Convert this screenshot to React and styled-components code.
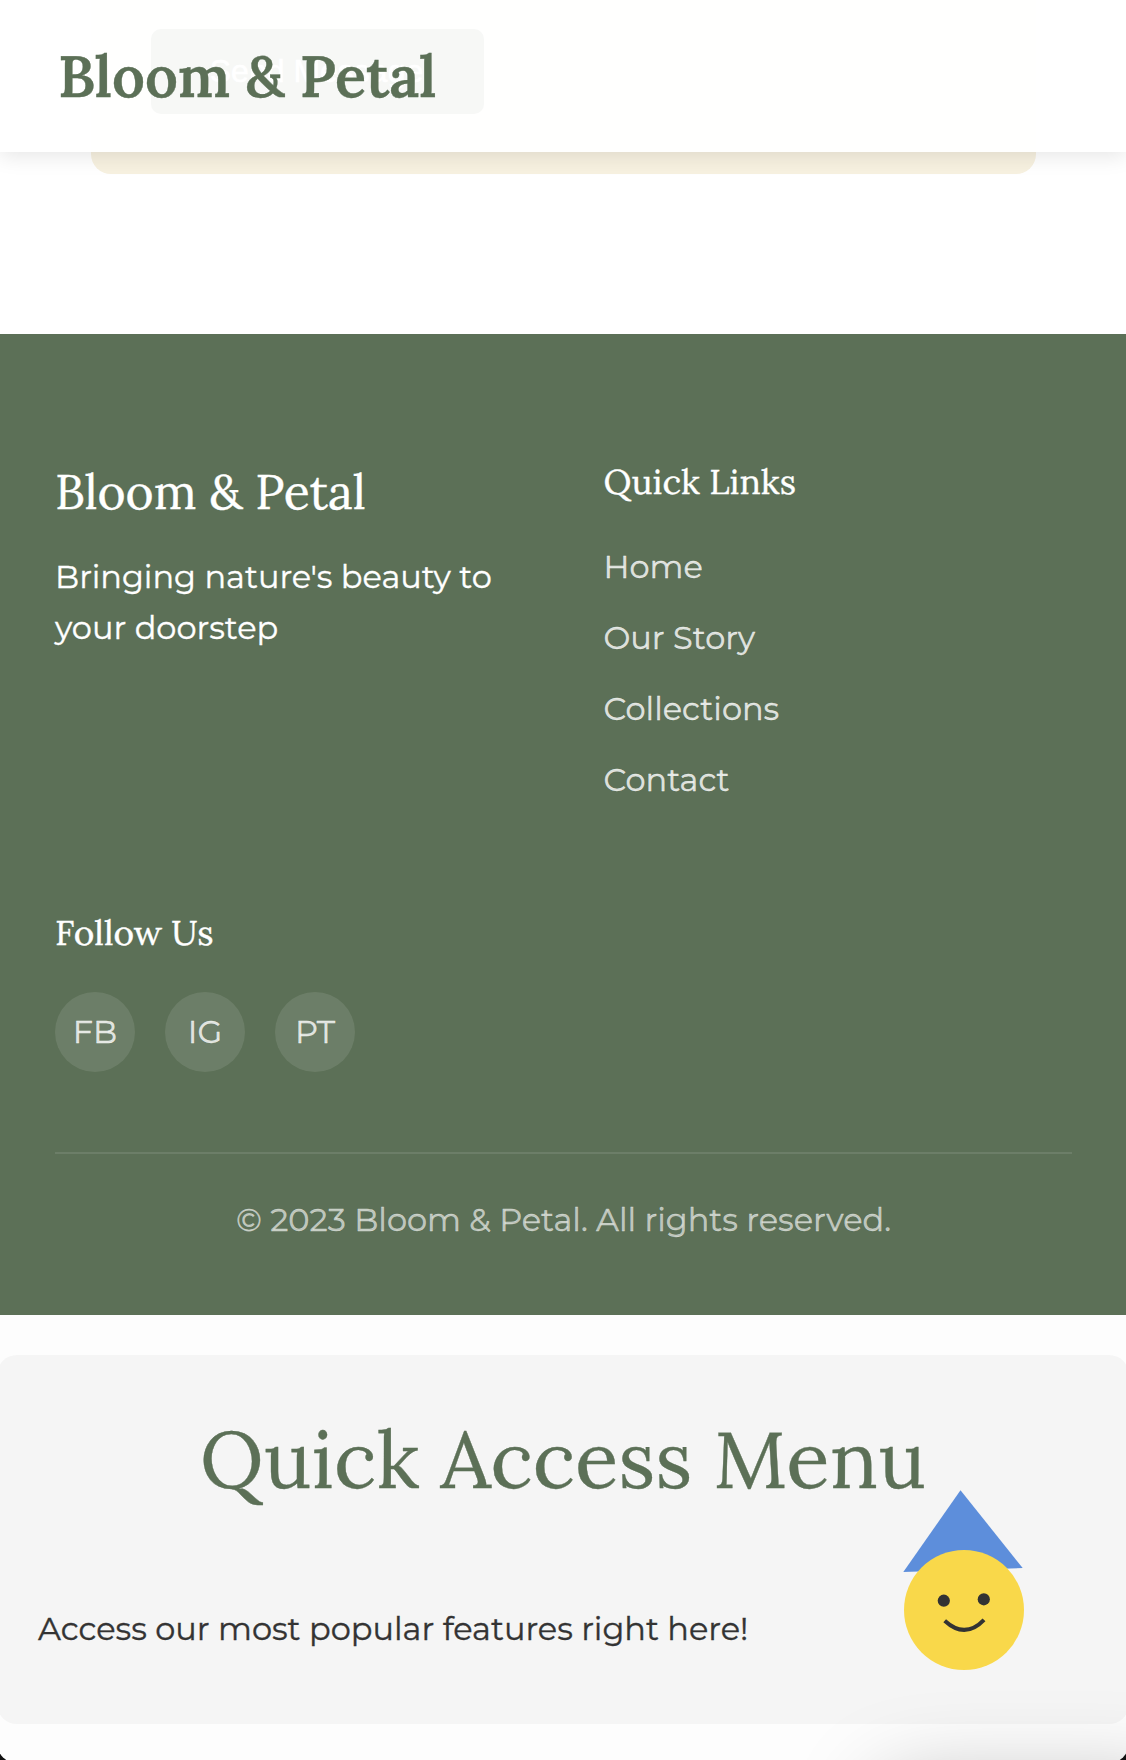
import React from "react";
import styled, { createGlobalStyle } from "styled-components";

const serif = '"Lora", "Liberation Serif", serif';
const sans = '"Montserrat", Inter, "Liberation Sans", sans-serif';
const green = "#5c7057";

const GlobalStyle = createGlobalStyle`
  * { box-sizing: border-box; margin: 0; padding: 0; }
  body {
    background: #fdfdfd;
    color: #333;
    font-family: ${sans};
    font-size: 32px;
    line-height: 51.2px;
    -webkit-text-stroke: 0.35px currentColor;
    overflow: hidden;
  }
`;

const Page = styled.div`
  position: relative;
  height: 1760px;
  overflow: hidden;
`;

const Header = styled.header`
  position: fixed;
  inset: 0 0 auto 0;
  z-index: 5;
  height: 152px;
  padding: 0 58px;
  display: flex;
  align-items: center;
  background: rgba(255, 255, 255, 0.95);
  box-shadow: 0 4px 20px rgba(0, 0, 0, 0.1);
`;

const Logo = styled.div`
  font: 600 57.6px/92px ${serif};
  color: ${green};
`;

const ContactSection = styled.section`
  height: 334px;
  padding: 0 90px 160px 91px;
  background: #fff;
`;

const FormCard = styled.div`
  height: 174px;
  padding: 29px 60px 60px;
  border-radius: 0 0 20px 20px;
  background: #f7f1e0;
`;

const SendButton = styled.button`
  width: 333px;
  height: 85px;
  padding-right: 2px;
  border: 0;
  border-radius: 10px;
  background: ${green};
  color: #fff;
  font: 32px "Liberation Sans", sans-serif;
`;

const Footer = styled.footer`
  height: 981px;
  padding: 120px 54px 0 55px;
  background: ${green};
  color: #fff;
`;

const FooterGrid = styled.div`
  display: grid;
  grid-template-columns: 1fr 1fr;
  gap: 80px;
`;

const Brand = styled.h3`
  margin-bottom: 22px;
  font: 400 48px/75px ${serif};
`;

const Heading = styled.h4`
  font: 400 35.2px/56px ${serif};
`;

const Line = styled.span`
  display: block;
  white-space: nowrap;
`;

const Links = styled.ul`
  margin-top: 31px;
  list-style: none;
`;

const LinkItem = styled.li`
  height: 71px;
  color: rgba(255, 255, 255, 0.8);
`;

const Socials = styled.div`
  display: flex;
  gap: 30px;
  margin-top: 31px;
`;

const Social = styled.a`
  display: grid;
  place-items: center;
  width: 80px;
  height: 80px;
  border-radius: 50%;
  background: rgba(255, 255, 255, 0.1);
  color: rgba(255, 255, 255, 0.8);
`;

const Copyright = styled.div`
  margin-top: 80px;
  padding-top: 40px;
  border-top: 2px solid rgba(255, 255, 255, 0.1);
  color: rgba(255, 255, 255, 0.6);
  text-align: center;
`;

const QuickMenu = styled.section`
  position: relative;
  height: 369px;
  margin: 40px -3px 0;
  padding: 40px 41px;
  border-radius: 20px;
  background: #f5f5f5;
`;

const QuickTitle = styled.h2`
  margin-bottom: 80px;
  text-align: center;
  font: 400 80px/128px ${serif};
  color: ${green};
`;

const Mascot = styled.svg`
  position: absolute;
  left: 903px;
  top: 130px;
`;

const FloatingShadow = styled.div`
  position: fixed;
  left: 880px;
  right: -60px;
  top: 1785px;
  height: 200px;
  border-radius: 30px;
  box-shadow: 0 0 90px rgba(0, 0, 0, 0.28);
`;

const WindowFrame = styled.div`
  position: fixed;
  inset: -30px -3px -2.5px;
  z-index: 9;
  border-radius: 20px;
  box-shadow: 0 0 0 20px #111;
  pointer-events: none;
`;

const links = ["Home", "Our Story", "Collections", "Contact"];
const socials = ["FB", "IG", "PT"];

export default function App() {
  return (
    <Page>
      <GlobalStyle />
      <Header>
        <Logo>Bloom &amp; Petal</Logo>
      </Header>
      <ContactSection>
        <FormCard>
          <SendButton>Send Message</SendButton>
        </FormCard>
      </ContactSection>
      <Footer>
        <FooterGrid>
          <div>
            <Brand>Bloom &amp; Petal</Brand>
            <Line>Bringing nature's beauty to</Line>
            <Line>your doorstep</Line>
          </div>
          <div>
            <Heading>Quick Links</Heading>
            <Links>
              {links.map((label) => (
                <LinkItem key={label}>{label}</LinkItem>
              ))}
            </Links>
          </div>
          <div>
            <Heading>Follow Us</Heading>
            <Socials>
              {socials.map((label) => (
                <Social key={label}>{label}</Social>
              ))}
            </Socials>
          </div>
        </FooterGrid>
        <Copyright>© 2023 Bloom &amp; Petal. All rights reserved.</Copyright>
      </Footer>
      <QuickMenu>
        <QuickTitle>Quick Access Menu</QuickTitle>
        <Line>Access our most popular features right here!</Line>
        <Mascot width="130" height="190" viewBox="900 1485 130 190">
          <path d="M960.5 1490.3 903.3 1572 1022.7 1568Z" fill="#5d8edb" />
          <circle cx="964" cy="1610" r="60" fill="#f9d84a" />
          <circle cx="943.8" cy="1600.7" r="6.1" fill="#333" />
          <circle cx="983.8" cy="1599.3" r="6.1" fill="#333" />
          <path d="M944.7 1620.8Q965 1639.5 984 1619.8" fill="none" stroke="#333" strokeWidth="4" />
        </Mascot>
      </QuickMenu>
      <FloatingShadow />
      <WindowFrame />
    </Page>
  );
}
